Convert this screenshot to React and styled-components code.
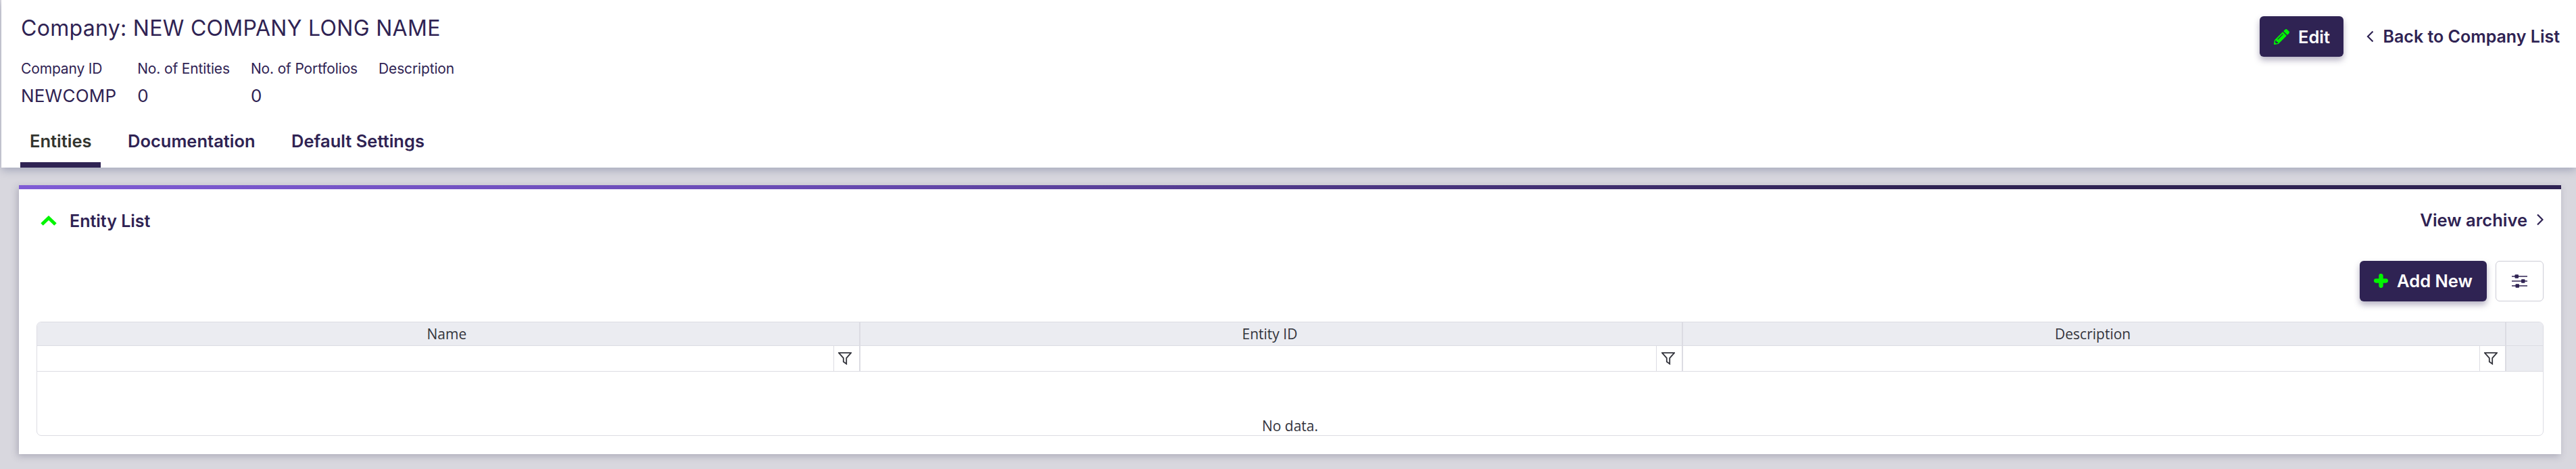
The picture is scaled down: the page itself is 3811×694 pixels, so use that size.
import React from 'react'
import styled, { createGlobalStyle } from 'styled-components'
import { FaPencilAlt } from 'react-icons/fa'

const INK = '#2f2353'
const GREEN = '#00f500'
const LINE = '#dcdce3'

const columns = ['Name', 'Entity ID', 'Description']
const facts = [
 { label: 'Company ID', value: 'NEWCOMP' },
 { label: 'No. of Entities', value: '0' },
 { label: 'No. of Portfolios', value: '0' },
 { label: 'Description', value: '' },
]
const tabs = ['Entities', 'Documentation', 'Default Settings']

function FilterIcon() {
 return (
  <svg width="20" height="19" viewBox="0 0 20 19" fill="none" stroke="#33343c" strokeWidth="1.8">
   <path d="M1 1.2h18l-6.8 7.6v8.6l-4.4-3.2V8.8z" strokeLinejoin="miter" />
  </svg>
 )
}

function SlidersIcon() {
 return (
  <svg width="23" height="20" viewBox="0 0 23 20" fill={INK}>
   <rect x="0" y="2.2" width="23" height="1.5" />
   <rect x="0" y="9.2" width="23" height="1.5" />
   <rect x="0" y="16.2" width="23" height="1.5" />
   <rect x="4.5" y="0.2" width="5.5" height="5.5" rx="1" />
   <rect x="14" y="7.2" width="5.5" height="5.5" rx="1" />
   <rect x="5.5" y="14.2" width="5.5" height="5.5" rx="1" />
  </svg>
 )
}

function PlusIcon() {
 return (
  <svg width="21" height="21" viewBox="0 0 21 21" fill="none" stroke={GREEN} strokeWidth="6.5" strokeLinecap="round">
   <path d="M10.5 3.2v14.6M3.2 10.5h14.6" />
  </svg>
 )
}

export default function App() {
 return (
  <>
   <GlobalStyle />
   <Page>
    <Header>
     <HeaderTop>
      <div>
       <Title>Company: NEW COMPANY LONG NAME</Title>
       <Facts>
        {facts.map((fact) => (
         <Fact key={fact.label}>
          <FactLabel>{fact.label}</FactLabel>
          <FactValue>{fact.value}</FactValue>
         </Fact>
        ))}
       </Facts>
      </div>
      <HeaderActions>
       <PrimaryButton $width={124}>
        <FaPencilAlt size={23} color={GREEN} />
        Edit
       </PrimaryButton>
       <TextLink $size={25}>
        <svg width="11" height="18" viewBox="0 0 11 18" fill="none" stroke={INK} strokeWidth="2.2">
         <path d="M9.5 1.5L2 9l7.5 7.5" />
        </svg>
        Back to Company List
       </TextLink>
      </HeaderActions>
     </HeaderTop>
     <Tabs>
      {tabs.map((tab, i) => (
       <Tab key={tab} $active={i === 0}>{tab}</Tab>
      ))}
     </Tabs>
    </Header>
    <Main>
     <Card>
      <CardHead>
       <CardTitle>
        <svg width="24" height="15" viewBox="0 0 24 15" fill="none" stroke={GREEN} strokeWidth="5">
         <path d="M2 13L12 3.5 22 13" />
        </svg>
        Entity List
       </CardTitle>
       <TextLink $size={25.5}>
        View archive
        <svg width="10" height="18" viewBox="0 0 10 18" fill="none" stroke={INK} strokeWidth="2.2" style={{ marginLeft: 1 }}>
         <path d="M1 1.5L8.5 9 1 16.5" />
        </svg>
       </TextLink>
      </CardHead>
      <Toolbar>
       <PrimaryButton $width={188}>
        <PlusIcon />
        Add New
       </PrimaryButton>
       <IconButton><SlidersIcon /></IconButton>
      </Toolbar>
      <Table>
       <HeadRow>
        {columns.map((col) => <HeadCell key={col}>{col}</HeadCell>)}
        <ScrollCell />
       </HeadRow>
       <FilterRow>
        {columns.map((col) => (
         <FilterCell key={col}>
          <FilterInput />
          <FilterButton><FilterIcon /></FilterButton>
         </FilterCell>
        ))}
        <ScrollCell />
       </FilterRow>
       <EmptyRow>No data.</EmptyRow>
      </Table>
     </Card>
    </Main>
   </Page>
  </>
 )
}

const GlobalStyle = createGlobalStyle`
 * {
  box-sizing: border-box;
 }
 html, body {
  margin: 0;
  height: 100%;
  overflow: hidden;
  background: #d8d7de;
 }
`

const Page = styled.div`
 width: 3811px;
 height: 694px;
 font-family: 'Inter', 'Liberation Sans', sans-serif;
 color: ${INK};
 background: #d8d7de;
`

const Header = styled.header`
 height: 248px;
 margin-left: 2px;
 background: #fff;
 box-shadow: 0 4px 12px rgba(70, 80, 120, 0.35);
 display: flex;
 flex-direction: column;
 justify-content: space-between;
`

const HeaderTop = styled.div`
 display: flex;
 justify-content: space-between;
 align-items: flex-start;
 padding: 24px 24px 0 29px;
`

const Title = styled.h1`
 margin: 0;
 font-size: 32px;
 line-height: 36px;
 font-weight: 400;
 letter-spacing: 0.3px;
`

const Facts = styled.div`
 display: flex;
 gap: 31px;
 margin-top: 29px;
`

const Fact = styled.div`
 display: flex;
 flex-direction: column;
`

const FactLabel = styled.span`
 font-size: 21px;
 line-height: 26px;
 letter-spacing: -0.15px;
`

const FactValue = styled.span`
 margin-top: 12px;
 font-size: 26px;
 line-height: 30px;
 min-height: 30px;
 letter-spacing: 0.2px;
`

const HeaderActions = styled.div`
 display: flex;
 align-items: center;
 gap: 34px;
`

const PrimaryButton = styled.button`
 width: ${(p) => p.$width}px;
 height: 60px;
 border: 0;
 border-radius: 6px;
 background: ${INK};
 color: #fff;
 font-family: inherit;
 font-size: 25.5px;
 font-weight: 600;
 display: flex;
 align-items: center;
 justify-content: center;
 gap: 13px;
 box-shadow: 0 5px 10px rgba(47, 35, 83, 0.35);
`

const TextLink = styled.a`
 display: flex;
 align-items: center;
 gap: 13px;
 font-size: ${(p) => p.$size}px;
 font-weight: 600;
 color: ${INK};
`

const Tabs = styled.nav`
 display: flex;
 gap: 25.5px;
 padding-left: 28px;
`

const Tab = styled.div`
 height: 56px;
 padding: 2px 14px 0;
 display: flex;
 align-items: flex-start;
 font-size: 25.5px;
 line-height: 30px;
 font-weight: 600;
 color: ${(p) => (p.$active ? '#33352f' : INK)};
 border-bottom: 8px solid ${(p) => (p.$active ? INK : 'transparent')};
`

const Main = styled.main`
 padding: 26px 22px 22px 28px;
`

const Card = styled.section`
 height: 398px;
 background: #fff;
 border-top: 6px solid;
 border-image: linear-gradient(90deg, #7f5bd5 0%, #6a4bb5 30%, #2f2353 75%) 1;
 box-shadow: -2px 3px 10px rgba(70, 70, 100, 0.3);
 padding: 0 26px 0 26px;
 display: flex;
 flex-direction: column;
`

const CardHead = styled.div`
 display: flex;
 justify-content: space-between;
 align-items: center;
 height: 90px;
 padding-left: 6px;
`

const CardTitle = styled.h2`
 margin: 0;
 display: flex;
 align-items: center;
 gap: 19px;
 font-size: 25px;
 font-weight: 600;
 padding-top: 3px;
`

const Toolbar = styled.div`
 display: flex;
 justify-content: flex-end;
 align-items: center;
 gap: 13px;
 margin-top: 15px;
`

const IconButton = styled.button`
 width: 71px;
 height: 60px;
 margin-top: 1px;
 border: 1px solid #cdcdd6;
 border-radius: 6px;
 background: #fff;
 display: flex;
 align-items: center;
 justify-content: center;
`

const Table = styled.div`
 margin-top: 30px;
 border: 1.5px solid ${LINE};
 border-radius: 7px;
 overflow: hidden;
 font-family: 'Open Sans', 'Liberation Sans', sans-serif;
 color: #33343c;
 font-size: 21px;
`

const HeadRow = styled.div`
 display: grid;
 grid-template-columns: repeat(3, 1fr) 54px;
 height: 35px;
 background: #ebecf1;
 border-bottom: 1.5px solid ${LINE};
`

const FilterRow = styled.div`
 display: grid;
 grid-template-columns: repeat(3, 1fr) 54px;
 height: 38px;
 border-bottom: 1.5px solid ${LINE};
`

const HeadCell = styled.div`
 display: flex;
 align-items: center;
 justify-content: center;
 border-right: 2px solid ${LINE};
 line-height: 1;
 padding-right: 4px;
`

const FilterCell = styled.div`
 display: flex;
 border-right: 2px solid ${LINE};
`

const FilterInput = styled.div`
 flex: 1;
`

const FilterButton = styled.div`
 width: 38px;
 padding-right: 4px;
 border-left: 1.5px solid ${LINE};
 display: flex;
 align-items: center;
 justify-content: center;
`

const ScrollCell = styled.div`
 background: #ebecf1;
`

const EmptyRow = styled.div`
 height: 94px;
 display: flex;
 align-items: flex-end;
 justify-content: center;
 line-height: 28px;
`
